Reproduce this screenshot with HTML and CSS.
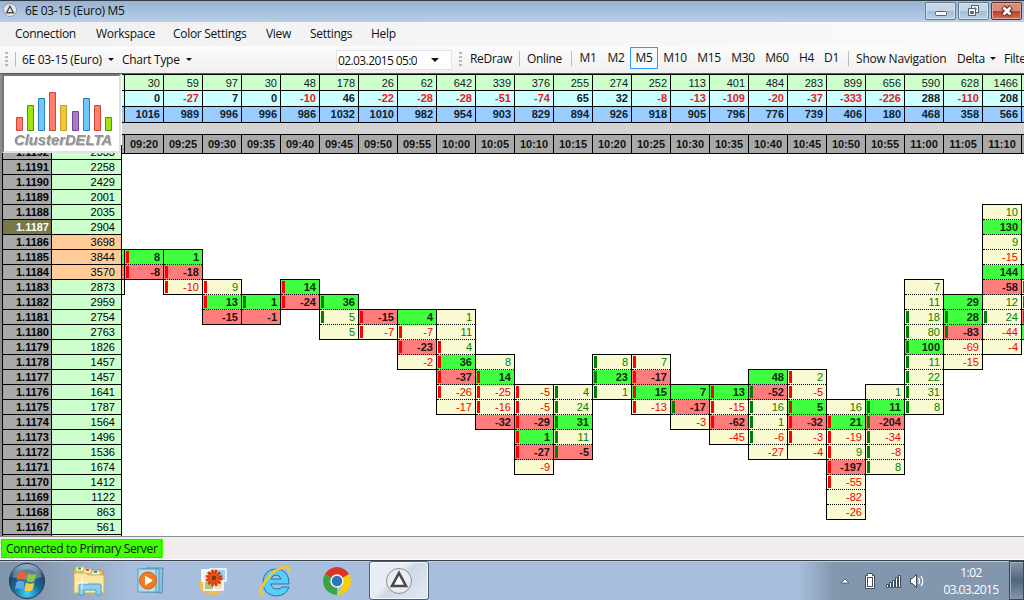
FILE: index.html
```html
<!DOCTYPE html>
<html lang="en">
    <head>
        <meta charset="utf-8">
        <title>6E 03-15 (Euro) M5</title>
        <link rel="stylesheet" href="styles.css">
        <script src="chart.js" defer></script>
    </head>
    <body>
        <div class="titlebar">
            <svg class="app-icon" width="14" height="14" viewBox="0 0 26 26">
                <circle cx="13" cy="13" r="12" fill="#e9eaeb" stroke="#858b93" stroke-width="1.5"/>
                <path d="M13 6 L19.500 18 H6.500 Z" fill="none" stroke="#444d59" stroke-width="2.600"/>
            </svg>
            <span class="title-txt">6E 03-15 (Euro) M5</span>
            <div class="win-btn">
                <svg width="29" height="16"><rect x="9.500" y="8.500" width="11" height="4" rx="1" fill="#f7f7f7" stroke="#52606f"/></svg>
            </div>
            <div class="win-btn">
                <svg width="29" height="16" fill="#f7f7f7" stroke="#52606f"><path d="M12.500 2.500h7v7h-7z M15 5h2v2h-2z"/><path fill-rule="evenodd" d="M9.500 5.500h7v7h-7z M11.500 8.500h3v2h-3z"/></svg>
            </div>
            <div class="win-btn close">
                <svg width="29" height="16"><path d="M11 4l8 8M19 4l-8 8" stroke="#5d2925" stroke-width="5"/><path d="M11.500 4.500l7 7M18.500 4.500l-7 7" stroke="#fff" stroke-width="2.800"/></svg>
            </div>
        </div>
        <div class="menu">
            <span class="m-connection">Connection</span>
            <span class="m-workspace">Workspace</span>
            <span class="m-color">Color Settings</span>
            <span class="m-view">View</span>
            <span class="m-settings">Settings</span>
            <span>Help</span>
        </div>
        <div class="toolbar">
            <i class="grip"></i>
            <i class="sep"></i>
            <span class="t-symbol">6E 03-15 (Euro)</span><i class="arrow"></i>
            <span class="t-type">Chart Type</span><i class="arrow"></i>
            <div class="date"><span>02.03.2015 05:00</span><i class="arrow big"></i></div>
            <i class="grip second"></i>
            <div class="tools">
                <span class="t-redraw">ReDraw</span>
                <i class="sep"></i>
                <span class="t-online">Online</span>
                <i class="sep"></i>
                <span class="tf first">M1</span>
                <span class="tf">M2</span>
                <span class="tf active">M5</span>
                <span class="tf wide">M10</span>
                <span class="tf wide">M15</span>
                <span class="tf wide">M30</span>
                <span class="tf wide">M60</span>
                <span class="tf narrow">H4</span>
                <span class="tf narrow">D1</span>
                <i class="sep after"></i>
                <span class="t-nav">Show Navigation</span>
                <span class="t-delta">Delta</span><i class="arrow"></i>
                <span class="t-filter">Filter</span>
            </div>
        </div>
        <div class="chart">
            <div class="axis" id="axis"></div>
            <div class="main">
                <div class="row volume" id="volume"></div>
                <div class="row delta" id="delta"></div>
                <div class="row total" id="total"></div>
                <div class="spacer"></div>
                <div class="row time" id="time"></div>
                <div class="plot" id="plot"></div>
            </div>
            <div class="logo">
                <svg width="115" height="75" viewBox="4 76 115 75">
                    <g stroke-width="1">
                        <g fill="#ff7f6e" stroke="#cf4438">
                            <path d="M16.500 117.500h6v13h-6z"/>
                            <path d="M49.500 92.500h6v38h-6z"/>
                            <path d="M94.500 105.500h6v25h-6z"/>
                        </g>
                        <g fill="#9ce60d" stroke="#4f9310">
                            <path d="M27.500 105.500h6v25h-6z"/>
                            <path d="M105.500 117.500h6v13h-6z"/>
                        </g>
                        <g fill="#72c6ff" stroke="#2583ba">
                            <path d="M38.500 98.500h6v32h-6z"/>
                            <path d="M83.500 98.500h6v32h-6z"/>
                        </g>
                        <path fill="#efc73b" stroke="#c69c23" d="M60.500 105.500h6v25h-6z"/>
                        <path fill="#a979c9" stroke="#71459a" d="M72.500 111.500h6v19h-6z"/>
                    </g>
                    <text class="logo-txt" x="14" y="145" textLength="98" lengthAdjust="spacingAndGlyphs">ClusterDELTA</text>
                </svg>
            </div>
        </div>
        <div class="status"><span class="connected">Connected to Primary Server</span></div>
        <div class="taskbar">
            <svg class="start" width="38" height="38" viewBox="0 0 38 38">
                <defs>
                    <radialGradient id="orb" cx=".5" cy=".85" r=".8">
                        <stop offset="0" stop-color="#45d3ff"/>
                        <stop offset=".45" stop-color="#176d9e"/>
                        <stop offset=".8" stop-color="#1e456a"/>
                        <stop offset="1" stop-color="#8fb1c9"/>
                    </radialGradient>
                </defs>
                <circle cx="19" cy="19" r="17.500" fill="url(#orb)" stroke="#1d3a58"/>
                <path d="M4 15a16 16 0 0 1 30 0q-15 5-30 0z" fill="#fff" opacity=".3"/>
                <path d="M10.500 11q4-3 8 0l-1.500 7.500q-4-2.500-8 0z" fill="#ef6130"/>
                <path d="M20 11.500q4 2.500 8.500 0l-1.800 7.500q-4 2.500-8.200 0z" fill="#91c53c"/>
                <path d="M8.500 20q4-2.500 8 0l-1.600 7.500q-4-2.500-8 0z" fill="#5ba9e6"/>
                <path d="M18 20.500q4 2.500 8.300 0l-1.700 7.500q-4 2.500-8.200 0z" fill="#fccb3d"/>
            </svg>
            <div class="tasks">
                <svg width="34" height="34" viewBox="0 0 34 34">
                    <path d="M2 5q0-1 1-1h8l2 2h16q2 0 2 2v20H2z" fill="#dfc36d" stroke="#b9974a"/>
                    <path d="M4 3h8v4H4zM12 5h7v4h-7zM20 7h8v4h-8z" fill="#fffdf0" stroke="#d1bc7a"/>
                    <path d="M6 3.500h3v2H6z" fill="#1fb13d"/><path d="M14 5h3v2h-3z" fill="#dd4335"/><path d="M22 7h3v2h-3z" fill="#2c8bdc"/>
                    <path d="M2 9h12l2 2h16v18H2z" fill="#f9e7a2" stroke="#d1b25c"/>
                    <path d="M7 31V22q0-2 2-2h18q2 0 2 2v9h-5v-5H12v5z" fill="#8dcdf0" stroke="#4d9dc8"/>
                    <path d="M10 13v12M4 19h12" stroke="#fff"/>
                </svg>
                <svg width="34" height="34" viewBox="0 0 34 34">
                    <path d="M12 4h17l-1 25-17-2z" fill="#8fc3de" stroke="#528caf"/>
                    <path d="M8 5h17v23H8z" fill="#a5d4eb" stroke="#5796b9"/>
                    <path d="M4 5h18v23H4z" fill="#b3dff3" stroke="#5a9bc0"/>
                    <circle cx="14" cy="16.500" r="8.500" fill="#f5791d" stroke="#d65f11"/>
                    <path d="M11 11.500v10l8-5z" fill="#fff"/>
                </svg>
                <svg width="34" height="34" viewBox="0 0 34 34">
                    <path d="M3 16Q1 31 20 31l5-3q-14 0-17-11z" fill="#f2bc58"/>
                    <path d="M6 6h12v11H6z" fill="#eef0e4" stroke="#fff" stroke-width="1.500"/>
                    <path d="M8 17h10v9H8z" fill="#a8c98a" stroke="#fff" stroke-width="1.500"/>
                    <path d="M18 17h9v9h-9z" fill="#f1ddb8" stroke="#fff" stroke-width="1.500"/>
                    <path d="M14 5h16v12H14z" fill="#9bd0ec" stroke="#fff" stroke-width="1.500"/>
                    <circle cx="18" cy="14" r="7" fill="#f0672a"/>
                    <circle cx="18" cy="14" r="6" fill="none" stroke="#d63c08" stroke-width="5" stroke-dasharray="2 1.140"/>
                    <circle cx="18" cy="14" r="2.500" fill="#8c2f0c"/>
                </svg>
                <svg width="34" height="34" viewBox="0 0 34 34">
                    <path fill-rule="evenodd" d="M31 20H13q1 5 6 5 4 0 5-2h7q-3 9-13 9Q5 31 5 18 6 5 18 5q13 0 13 15zM13 15h10q-1-4-5-4t-5 4z" fill="#5acdf7" stroke="#1878b7"/>
                    <path d="M6 30Q-1 31 5 21 14 5 27 3q5-1 3 5" fill="none" stroke="#f7c52c" stroke-width="2.600"/>
                </svg>
                <svg width="34" height="34" viewBox="0 0 34 34">
                    <path d="M17 17L4.900 10A14 14 0 0 1 29.100 10z" fill="#dc3528"/>
                    <path d="M4.900 10L17 17l0 14A14 14 0 0 1 4.900 10z" fill="#3ba545"/>
                    <path d="M29.100 10H17v7l6 4-6 10A14 14 0 0 0 29.100 10z" fill="#fccd05"/>
                    <path d="M17 10h12.100L17 17z" fill="#dc3528"/>
                    <circle cx="17" cy="17" r="6" fill="#3273b5" stroke="#eef3f5" stroke-width="1.500"/>
                </svg>
            </div>
            <div class="task-active">
                <svg width="28" height="28" viewBox="0 0 28 28">
                    <circle cx="14" cy="14" r="12.500" fill="#ececed" stroke="#8b8e94"/>
                    <path d="M14 6L21 19H7z" fill="#fafafa" stroke="#424b58" stroke-width="2.600"/>
                </svg>
            </div>
            <div class="tray">
                <svg width="90" height="20" viewBox="0 0 90 20">
                    <path d="M5 12l4-4 4 4z" fill="#fff" stroke="#56677b"/>
                    <g fill="#fff" stroke="#3f4c5c">
                        <path d="M29.500 4.500h2v-2h5v2h2v13h-9z"/>
                        <path fill="#43515f" stroke="none" d="M31 6h6v10h-6z"/>
                        <path stroke="none" d="M32 7h4v8h-4z"/>
                        <path d="M50.500 13.500h2v3h-2zM53.500 11.500h2v5h-2zM56.500 9.500h2v7h-2zM59.500 6.500h2v10h-2zM62.500 4.500h2v12h-2z"/>
                        <path d="M74.500 7.500h2l4-4v13l-4-4h-2z"/>
                    </g>
                    <path d="M82.500 7q2 3 0 6M85 5q3.500 5 0 10" fill="none" stroke="#fff" stroke-width="1.300"/>
                </svg>
                <div class="clock"><span>1:02</span><span>03.03.2015</span></div>
                <div class="show-desktop"></div>
            </div>
        </div>
    </body>
</html>
```
FILE: styles.css
```css
body {
    margin: 0;
    width: 1024px;
    height: 600px;
    overflow: hidden;
    display: flex;
    flex-direction: column;
    font-family: "Open Sans","Noto Sans",sans-serif;
    font-size: 12px;
    letter-spacing: -0.3px;
    color: #111;
    white-space: nowrap;
    user-select: none;
}
svg {
    display: block;
    flex: none;
}
.titlebar {
    box-sizing: border-box;
    height: 22px;
    flex: none;
    display: flex;
    align-items: flex-start;
    gap: 2px;
    padding: 0 2px 0 3px;
    border-top: 1px solid #333b45;
    background: linear-gradient(#98b4d3, #b7cfe8);
}
.app-icon {
    margin-top: 2px;
}
.title-txt {
    flex: auto;
    margin-left: 6px;
    line-height: 19px;
}
.win-btn {
    width: 29px;
    height: 16px;
    margin-top: 1px;
    border: 1px solid #647b96;
    border-radius: 2px;
    background: linear-gradient(#c4d5e7 48%, #a4bbd4 50%, #bbd0e6);
    box-shadow: inset 0 0 0 1px #d5e3f1;
}
.close {
    border-color: #67302d;
    background: linear-gradient(#d98b79 48%, #bc3b28 50%, #ce7156);
    box-shadow: inset 0 0 0 1px #e5a698;
}
.menu {
    height: 24px;
    flex: none;
    display: flex;
    padding-left: 15px;
    line-height: 24px;
    background: linear-gradient(90deg, #f0f0f0, #fafafa);
}
.m-connection {
    width: 81px;
}
.m-workspace {
    width: 77px;
}
.m-color {
    width: 93px;
}
.m-view {
    width: 44px;
}
.m-settings {
    width: 61px;
}
.toolbar {
    box-sizing: border-box;
    height: 28px;
    flex: none;
    display: flex;
    align-items: center;
    padding-left: 5px;
    border-bottom: 1px solid #5b5b5b;
    background: linear-gradient(#fcfcfc, #f0f0f0);
}
.toolbar span {
    flex: none;
}
.grip {
    width: 3px;
    height: 15px;
    flex: none;
    background: repeating-linear-gradient(#b9b9b9 0 2px, transparent 2px 4px);
}
.sep {
    width: 1px;
    height: 15px;
    flex: none;
    background: #bdbdbd;
    margin-left: 7px;
    margin-right: 6px;
}
.arrow {
    flex: none;
    border: 3px solid transparent;
    border-top-color: #111;
    border-bottom: 0;
}
.t-symbol {
    width: 86px;
}
.t-type {
    width: 64px;
    margin-left: 8px;
}
.date {
    box-sizing: border-box;
    width: 116px;
    height: 20px;
    flex: none;
    display: flex;
    align-items: center;
    margin-left: 144px;
    margin-top: 1px;
    padding-left: 1px;
    border: 1px solid #e1e1e6;
    background: #fff;
}
.date span {
    width: 79px;
    margin-right: 14px;
    overflow: hidden;
    letter-spacing: -0.6px;
}
.big {
    border-width: 4px;
    border-bottom: 0;
}
.second {
    margin-left: 7px;
}
.tools {
    box-sizing: border-box;
    display: flex;
    align-items: center;
    width: 562px;
    flex: none;
    overflow: hidden;
    padding-left: 8px;
    margin-top: -3px;
}
.t-redraw {
    width: 42px;
}
.t-online {
    width: 37px;
    margin-left: 1px;
}
.tf {
    box-sizing: border-box;
    width: 28px;
    height: 22px;
    line-height: 20px;
    border: 1px solid transparent;
    text-align: center;
}
.first {
    margin-left: -4px;
}
.active {
    border-color: #3399ff;
    background: #f3f8fd;
}
.wide {
    width: 34px;
}
.narrow {
    width: 25px;
}
.after {
    margin-left: 4px;
    margin-right: 7px;
}
.t-nav {
    width: 101px;
    letter-spacing: -0.2px;
}
.t-delta {
    width: 33px;
}
.t-filter {
    margin-left: 8px;
}

/* chart */
.chart {
    height: 462px;
    flex: none;
    display: flex;
    position: relative;
    overflow: hidden;
    background: #fff;
    font-family: "Liberation Sans",Arial,sans-serif;
    font-size: 11px;
    letter-spacing: 0;
    color: #000;
}
.axis {
    box-sizing: border-box;
    width: 122px;
    flex: none;
    padding-top: 71px;
    border-left: 2px solid #8c8c8c;
}
.level {
    display: flex;
    height: 15px;
    line-height: 14px;
    text-align: right;
}
.price, .sum {
    box-sizing: border-box;
    border-bottom: 1px solid #000;
}
.price {
    width: 50px;
    padding-right: 2px;
    border-left: 1px solid #000;
    border-right: 1px solid #000;
    background: #a9a9a9;
    font-weight: bold;
}
.sum {
    width: 70px;
    padding-right: 6px;
    border-right: 1px solid #000;
    background: #ccffcc;
}
.peak .sum {
    background: #ffcc99;
}
.current .price {
    background: #77774a;
    color: #fff;
}
.main {
    width: 902px;
    flex: none;
    overflow: hidden;
}
.row {
    display: flex;
    height: 15px;
    line-height: 15px;
    border-bottom: 1px solid #000;
    text-align: right;
    font-weight: bold;
    color: #12222a;
}
.row span {
    box-sizing: border-box;
    width: 39px;
    flex: none;
    border-left: 1px solid #000;
    padding-right: 3px;
}
.row .edge {
    width: 2px;
    border: 0;
    padding: 0;
}
.row .neg {
    color: #f01818;
}
.volume {
    border-top: 1px solid #000;
    line-height: 17px;
    background: #ccffcc;
}
.row.volume {
    font-weight: normal;
}
.delta {
    background: #ccffff;
}
.total {
    background: #99ccff;
}
.spacer {
    height: 11px;
    background: #d3d3d3;
}
.time {
    height: 18px;
    line-height: 19px;
    border-top: 1px solid #000;
    background: #a9a9a9;
    color: #111;
}
.time span {
    text-align: center;
    padding: 0;
}
.plot {
    display: flex;
    align-items: flex-start;
    padding-top: 5px;
}
.cluster {
    box-sizing: border-box;
    width: 40px;
    flex: none;
    margin-right: -1px;
    border: 1px solid #000;
    border-bottom: 0;
}
.cluster.cut {
    width: 3px;
    border-left: 0;
}
.cell {
    height: 14px;
    line-height: 14px;
    padding-right: 3px;
    border-bottom: 1px dotted #000;
    background: #fafad2;
    color: #008000;
    display: flex;
    justify-content: flex-end;
    align-items: center;
}
.cut .cell {
    padding: 0;
}
.cell:last-child {
    border-bottom-style: solid;
}
.cell.neg {
    color: #f00000;
}
.cell.hot {
    background: #40ff40;
    color: #0c2e0c;
    font-weight: bold;
}
.cell.hot.neg {
    background: #ff7c7c;
    color: #2b1010;
}
.bar {
    width: 3px;
    height: 12px;
    margin-left: 1px;
    margin-right: auto;
}
.bar.r {
    background: #f00;
}
.bar.g {
    background: #008000;
}
.logo {
    position: absolute;
    left: 2px;
    top: 0;
    width: 115px;
    height: 75px;
    border: 2px solid #777;
    border-right-color: #e0e0e0;
    border-bottom-color: #e0e0e0;
    background: #fff;
}
.logo-txt {
    font-family: "Liberation Sans",Arial,sans-serif;
    font-size: 14px;
    font-style: italic;
    font-weight: bold;
    fill: #929292;
    filter: drop-shadow(1px 1px 0 #c9c9c9);
}

.status {
    box-sizing: border-box;
    height: 24px;
    flex: none;
    padding: 2px 1px;
    border-top: 1px solid #8c8c8c;
    border-bottom: 1px solid #fff;
    background: #f0edec;
}
.connected {
    display: block;
    box-sizing: border-box;
    width: 161px;
    height: 19px;
    padding-left: 4px;
    line-height: 18px;
    letter-spacing: -0.35px;
    border: 1px solid #8b9b83;
    background: #40ff00;
    box-shadow: 1px 0 #40ff00;
}
.taskbar {
    box-sizing: border-box;
    height: 40px;
    flex: none;
    display: flex;
    align-items: center;
    border-top: 1px solid #39434e;
    background: linear-gradient(90deg, #8294ab 0, #8799b0 40px, #a7bfdc 130px, #a7bfdc 798px, #8296ad 835px);
    box-shadow: inset 0 1px #b9cce3;
}
.start {
    margin-left: 8px;
}
.tasks {
    display: flex;
    gap: 28px;
    margin-left: 26px;
}
.task-active {
    box-sizing: border-box;
    width: 60px;
    height: 39px;
    display: flex;
    align-items: center;
    justify-content: center;
    margin-left: 15px;
    border: 1px solid #4e5e71;
    border-radius: 3px;
    background: linear-gradient(135deg, #e6edf5 40%, #cbd9e8 50%, #e3ebf4);
    box-shadow: inset 0 0 0 1px #f3f7fb;
}
.tray {
    height: 39px;
    display: flex;
    align-items: center;
    margin-left: auto;
    color: #fff;
}
.clock {
    display: flex;
    flex-direction: column;
    align-items: center;
    width: 72px;
    margin-left: 9px;
    line-height: 17px;
    letter-spacing: -0.6px;
}
.show-desktop {
    box-sizing: border-box;
    width: 15px;
    height: 39px;
    margin-left: 2px;
    border: 1px solid #38485a;
    background: linear-gradient(#8496a9, #52657b 50%, #8295aa);
    box-shadow: inset 1px 1px #a1b0c1;
}
```
FILE: chart.js
```javascript
const TOP = 1191;

const sums = [2333, 2258, 2429, 2001, 2035, 2904, 3698, 3844, 3570, 2873, 2959, 2754, 2763,
    1826, 1457, 1457, 1641, 1787, 1564, 1496, 1536, 1674, 1412, 1122, 863, 561];

// volume, delta, cumulative delta per bar
const bars = [
    [30, 0, 1016], [59, -27, 989], [97, 7, 996], [30, 0, 996], [48, -10, 986], [178, 46, 1032],
    [26, -22, 1010], [62, -28, 982], [642, -28, 954], [339, -51, 903], [376, -74, 829], [255, 65, 894],
    [274, 32, 926], [252, -8, 918], [113, -13, 905], [401, -109, 796], [484, -20, 776], [283, -37, 739],
    [899, -333, 406], [656, -226, 180], [590, 288, 468], [628, -110, 358], [1466, 208, 566]
];

// top price, then cells going down: * = highlighted, r/g = candle body
const clusters = [
    [1185, "+* -* +"],
    [1185, "8*r -8*r"],
    [1185, "1* -18*r -10r"],
    [1183, "9r 13*r -15*"],
    [1182, "1*g -1*"],
    [1183, "14*r -24*r"],
    [1182, "36*g 5g 5"],
    [1181, "-15*r -7r"],
    [1181, "4* -7r -23*r -2"],
    [1181, "1 11 4r 36*r -37*r -26r -17"],
    [1178, "8 14*r -25r -16r -32*"],
    [1176, "-5r -5r -29*r 1*r -27*r -9"],
    [1176, "4g 24g 31*g 11g -5*g"],
    [1178, "8g 23*g 1g"],
    [1178, "7r -17*r 15*r -13r"],
    [1176, "7* -17*g -3"],
    [1176, "13*r -15r -62*r -45"],
    [1177, "48* -52*g 16g 1g -6g -27"],
    [1177, "2r -5r 5*r -32*r -3r -4"],
    [1175, "16 21*r -19r 9r -197*r -55r -82 -26"],
    [1176, "1 11*g -204*g -34g -8g 8g"],
    [1183, "7 11 18g 80g 100*g 11g 22g 31g 8g"],
    [1182, "29* 28*g -83*g -69 -15"],
    [1188, "10 130* 9 -15 144* -58* 12 24g -44 -4"],
    [1184, "+* +g +g -*g +*"]
];

function add(parent, tag, cls, text) {
    const el = document.createElement(tag);
    el.className = cls;
    if (text !== undefined) el.textContent = text;
    parent.appendChild(el);
    return el;
}

const axis = document.getElementById("axis");
sums.forEach((sum, i) => {
    const price = TOP + 1 - i;
    const level = add(axis, "div", "level" + (sum > 3000 ? " peak" : "") + (price === 1187 ? " current" : ""));
    add(level, "div", "price", "1." + price);
    add(level, "div", "sum", sum);
});
// the next level is only partly visible
const rest = add(axis, "div", "level");
add(rest, "div", "price");
add(rest, "div", "sum");

["volume", "delta", "total"].forEach((id, n) => {
    const row = document.getElementById(id);
    add(row, "span", "edge");
    bars.forEach(bar => add(row, "span", bar[n] < 0 ? "neg" : "", bar[n]));
    add(row, "span", "");
});

const time = document.getElementById("time");
add(time, "span", "edge");
bars.forEach((bar, i) => {
    const min = 9 * 60 + 20 + i * 5;
    const hh = String(Math.floor(min / 60)).padStart(2, "0");
    add(time, "span", "", hh + ":" + String(min % 60).padStart(2, "0"));
});
add(time, "span", "");

const plot = document.getElementById("plot");
clusters.forEach(([top, cells], i) => {
    const col = add(plot, "div", "cluster" + (i === 0 ? " cut" : ""));
    col.style.marginTop = (TOP - top) * 15 + "px";
    cells.split(" ").forEach(c => {
        const cell = add(col, "div", "cell" + (c.includes("*") ? " hot" : "") + (c[0] === "-" ? " neg" : ""));
        const side = c.match(/[rg]$/);
        if (side) add(cell, "i", "bar " + side[0]);
        const value = c.match(/-?\d+/);
        if (value) cell.append(value[0]);
    });
});
```
